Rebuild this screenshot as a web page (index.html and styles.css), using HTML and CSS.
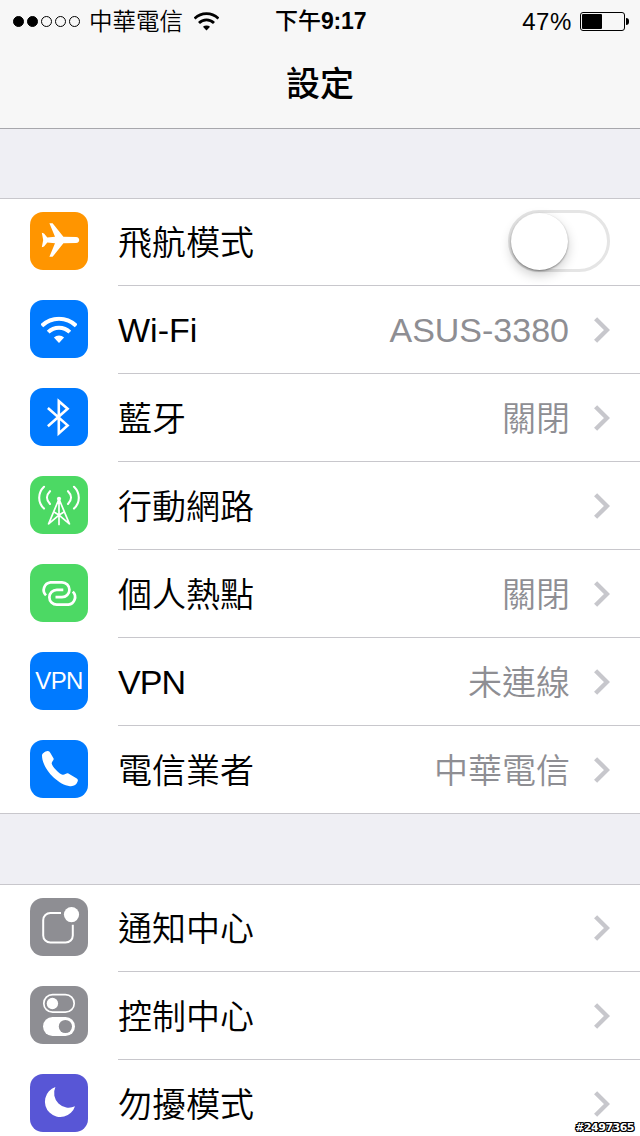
FILE: index.html
```html
<!DOCTYPE html>
<html lang="zh-Hant">
<head>
  <meta charset="UTF-8">
  <title>設定</title>
  <link rel="stylesheet" href="styles.css">
</head>
<body>
  <svg class="defs">
    <symbol id="wifi" viewBox="11 16.5 36 27">
      <path d="M11.8 25.8A24.3 24.3 0 0 1 46.2 25.8M18.2 32.2A15.3 15.3 0 0 1 39.8 32.2" fill="none" stroke="currentColor" stroke-width="4"/>
      <path d="M29 43L23.9 37.6A7.5 7.5 0 0 1 34.1 37.6Z" fill="currentColor"/>
    </symbol>
    <symbol id="chevron" viewBox="0 0 16 26">
      <path d="M1.6 1.7L13 13L1.6 24.3" fill="none" stroke="#c7c7cc" stroke-width="4.4"/>
    </symbol>
  </svg>

  <header>
    <div class="status-bar">
      <div class="status-left">
        <div class="signal">
          <i class="on"></i><i class="on"></i><i></i><i></i><i></i>
        </div>
        <span class="carrier">中華電信</span>
        <svg class="status-wifi" width="25" height="19"><use href="#wifi"/></svg>
      </div>
      <div class="time">下午<b>9:17</b></div>
      <div class="status-right">
        <span class="percent">47%</span>
        <div class="battery"><div class="level"></div></div>
        <div class="nub"></div>
      </div>
    </div>
    <h1>設定</h1>
  </header>

  <ul class="list">
    <li>
      <svg class="icon orange" viewBox="0 0 58 58">
        <path d="M46 25C48.3 25 49.2 26.7 49.2 28C49.2 29.3 48.3 31 46 31L33.4 31.2L22.6 44.8H19.4L25 31.2L17.3 30.4L14 34.6L11.8 35.2L13.2 28L11.8 20.8L14 21.4L17.3 25.6L25 24.8L19.4 11.2H22.6L33.4 24.8Z" fill="#fff"/>
      </svg>
      <div class="row">
        <span class="label">飛航模式</span>
        <div class="switch"><div class="knob"></div></div>
      </div>
    </li>
    <li>
      <svg class="icon blue" viewBox="0 0 58 58">
        <use href="#wifi" x="11" y="16.5" width="36" height="27"/>
      </svg>
      <div class="row">
        <span class="label en">Wi-Fi</span>
        <span class="value en">ASUS-3380</span>
        <svg class="chevron"><use href="#chevron"/></svg>
      </div>
    </li>
    <li>
      <svg class="icon blue" viewBox="0 0 58 58">
        <path d="M17.9 20L37.6 37.4L28.8 45.4V13.2L37.6 20.8L17.9 38.2" fill="none" stroke="#fff" stroke-width="2.6"/>
      </svg>
      <div class="row">
        <span class="label">藍牙</span>
        <span class="value">關閉</span>
        <svg class="chevron"><use href="#chevron"/></svg>
      </div>
    </li>
    <li>
      <svg class="icon green" viewBox="0 0 58 58">
        <g fill="none" stroke="#fff" stroke-width="1.7" stroke-linecap="round">
          <path d="M29 23L18.6 47.8M29 23L39.4 47.8M29 23V48.5M24.8 36.5L29 39L33.2 36.5M18.6 47.8L29 39L39.4 47.8"/>
          <path d="M14 10.8C7.6 17 7.6 26.5 14 32.6M44 10.8C50.4 17 50.4 26.5 44 32.6M20 15.2C16 19.2 16 24 20 28M38 15.2C42 19.2 42 24 38 28" stroke-width="2.1"/>
        </g>
        <circle cx="29" cy="22.8" r="2.1" fill="#fff"/>
      </svg>
      <div class="row">
        <span class="label">行動網路</span>
        <svg class="chevron"><use href="#chevron"/></svg>
      </div>
    </li>
    <li>
      <svg class="icon green" viewBox="0 0 58 58">
        <path d="M16 31.4A7.7 7.7 0 0 1 20.5 18.3H32A7.4 7.4 0 0 1 32 33.2H25.5M42.8 27.6A7.7 7.7 0 0 1 38.3 40.7H26.8A7.4 7.4 0 0 1 26.8 25.8H33.3" fill="none" stroke="#fff" stroke-width="2.7"/>
      </svg>
      <div class="row">
        <span class="label">個人熱點</span>
        <span class="value">關閉</span>
        <svg class="chevron"><use href="#chevron"/></svg>
      </div>
    </li>
    <li>
      <div class="icon blue vpn">VPN</div>
      <div class="row">
        <span class="label en tight">VPN</span>
        <span class="value">未連線</span>
        <svg class="chevron"><use href="#chevron"/></svg>
      </div>
    </li>
    <li>
      <svg class="icon blue" viewBox="0 0 58 58">
        <path d="M12 15.5C12 13.6 15 11.3 17.6 11C19 10.9 19.6 11.6 20.4 13L23.6 18.6C24.3 20 21.6 21.8 21.7 23.4C22 26.5 29.5 33.8 32.6 34.8C34.6 35.3 36.5 32.7 38.4 33.5L46.4 38.2C48 39.2 48.1 40 47.6 41.6C46.6 44.8 43.6 46.6 40 46.2C27 44.5 12 28 12 15.5Z" fill="#fff"/>
      </svg>
      <div class="row">
        <span class="label">電信業者</span>
        <span class="value">中華電信</span>
        <svg class="chevron"><use href="#chevron"/></svg>
      </div>
    </li>
  </ul>

  <ul class="list more">
    <li>
      <svg class="icon gray" viewBox="0 0 58 58">
        <path d="M31 15H20.5A7.2 7.2 0 0 0 13.2 22.2V37.4A7.2 7.2 0 0 0 20.5 44.6H35.6A7.2 7.2 0 0 0 42.8 37.4V26.8" fill="none" stroke="#fff" stroke-width="2"/>
        <circle cx="41.5" cy="16.6" r="7.6" fill="#fff"/>
      </svg>
      <div class="row">
        <span class="label">通知中心</span>
        <svg class="chevron"><use href="#chevron"/></svg>
      </div>
    </li>
    <li>
      <svg class="icon gray" viewBox="0 0 58 58">
        <rect x="13.8" y="8.6" width="30.4" height="17.6" rx="8.8" fill="none" stroke="#fff" stroke-width="1.7"/>
        <circle cx="22.4" cy="17.5" r="5.7" fill="#fff"/>
        <rect x="13" y="31" width="32" height="19" rx="9.5" fill="#fff"/>
        <circle cx="35.4" cy="40.5" r="6.6" fill="#8e8e93"/>
      </svg>
      <div class="row">
        <span class="label">控制中心</span>
        <svg class="chevron"><use href="#chevron"/></svg>
      </div>
    </li>
    <li>
      <svg class="icon purple" viewBox="0 0 58 58">
        <path d="M25.4 13A15.4 15.4 0 1 0 45 32.2A14.6 14.6 0 0 1 25.4 13Z" fill="#fff"/>
      </svg>
      <div class="row">
        <span class="label">勿擾模式</span>
        <svg class="chevron"><use href="#chevron"/></svg>
      </div>
    </li>
  </ul>

  <div class="watermark">#2497365</div>
</body>
</html>
```

FILE: styles.css
```css
* {
  box-sizing: border-box;
}

body {
  margin: 0;
  height: 1136px;
  position: relative;
  background: #efeff4;
  font-family: "Liberation Sans", "Noto Sans CJK TC", sans-serif;
  font-weight: 350;
  color: #000;
}

.defs {
  display: none;
}

header {
  height: 129px;
  background: #f7f7f7;
  border-bottom: 1px solid #a7a7ac;
}

.status-bar {
  display: grid;
  grid-template-columns: 1fr 92px 1fr;
  height: 40px;
  padding: 0 11px 0 13px;
  font-size: 24px;
  line-height: 40px;
}

.status-left, .status-right {
  display: flex;
  align-items: center;
}

.status-right {
  justify-content: flex-end;
}

.signal {
  display: flex;
  gap: 3px;
}

.signal i {
  width: 11px;
  height: 11px;
  border: 1px solid #000;
  border-radius: 50%;
}

.signal .on {
  background: #000;
}

.carrier {
  margin-left: 9px;
  padding-top: 2px;
  font-size: 23.5px;
}

.status-wifi {
  margin-left: 11px;
}

.time {
  padding-top: 1px;
  font-size: 23px;
  font-weight: 500;
  white-space: nowrap;
}

.time b {
  font-weight: bold;
  letter-spacing: -0.2px;
}

.percent {
  padding-top: 1px;
  letter-spacing: 0.6px;
}

.battery {
  width: 45px;
  height: 19px;
  margin: 1px 1px 0 8px;
  padding: 1px;
  border: 1px solid #000;
  border-radius: 3px;
}

.level {
  width: 20px;
  height: 15px;
  border-radius: 1px;
  background: #000;
}

.nub {
  width: 3px;
  height: 7px;
  margin-top: 1px;
  border-radius: 0 3px 3px 0;
  background: #000;
}

h1 {
  margin: 0;
  padding-top: 1px;
  font-size: 34px;
  font-weight: 500;
  line-height: 87px;
  text-align: center;
}

.list {
  list-style: none;
  margin: 69px 0 70px;
  padding: 0;
  background: #fff;
  border-top: 1px solid #c8c7cc;
  border-bottom: 1px solid #c8c7cc;
}

/* runs off the bottom of the screen */
.list.more {
  height: 252px;
  margin-bottom: 0;
  border-bottom: none;
  overflow: hidden;
}

.list li {
  display: flex;
  height: 88px;
  padding: 14px 0 0 30px;
}

.list li:first-child {
  height: 87px;
  padding-top: 13px;
}

.list li:last-child {
  height: 87px;
}

.icon {
  width: 58px;
  height: 58px;
  flex: none;
  margin-right: 30px;
  border-radius: 13px;
  color: #fff;
}

.orange { background: #ff9500; }
.blue { background: #007aff; }
.green { background: #4cd964; }
.gray { background: #8e8e93; }
.purple { background: #5856d6; }

.vpn {
  display: flex;
  align-items: center;
  justify-content: center;
  font-size: 24px;
  letter-spacing: -0.6px;
}

.row {
  flex: 1;
  display: flex;
  align-items: center;
  height: 74px;
  padding: 0 30px 15px 0;
  border-bottom: 1px solid #c8c7cc;
  font-size: 34px;
  line-height: 58px;
  white-space: nowrap;
}

.list li:last-child .row {
  height: 73px;
  padding-bottom: 15px;
  border-bottom: none;
}

.label {
  flex: 1;
  padding-top: 3px;
}

.value {
  margin-right: 24px;
  padding-top: 3px;
  color: #8e8e93;
}

.en {
  padding-top: 1px;
}

.value.en {
  margin-right: 25px;
}

.tight {
  letter-spacing: -0.9px;
}

.chevron {
  width: 16px;
  height: 26px;
  margin-top: 2px;
}

.switch {
  width: 102px;
  height: 62px;
  border: 3px solid #e5e5e5;
  border-radius: 31px;
}

.knob {
  width: 57px;
  height: 57px;
  border-radius: 50%;
  background: #fff;
  box-shadow: 0 1px 2px rgba(0,0,0,0.4), 0 5px 12px rgba(0,0,0,0.2);
}

.watermark {
  position: absolute;
  right: 6px;
  bottom: 1px;
  font: bold 11px/14px "DejaVu Sans", sans-serif;
  letter-spacing: -0.5px;
  color: #fff;
  text-shadow: 1px 0 #000, -1px 0 #000, 0 1px #000, 0 -1px #000, 1px 1px #000, -1px -1px #000, 1px -1px #000, -1px 1px #000;
}
```
